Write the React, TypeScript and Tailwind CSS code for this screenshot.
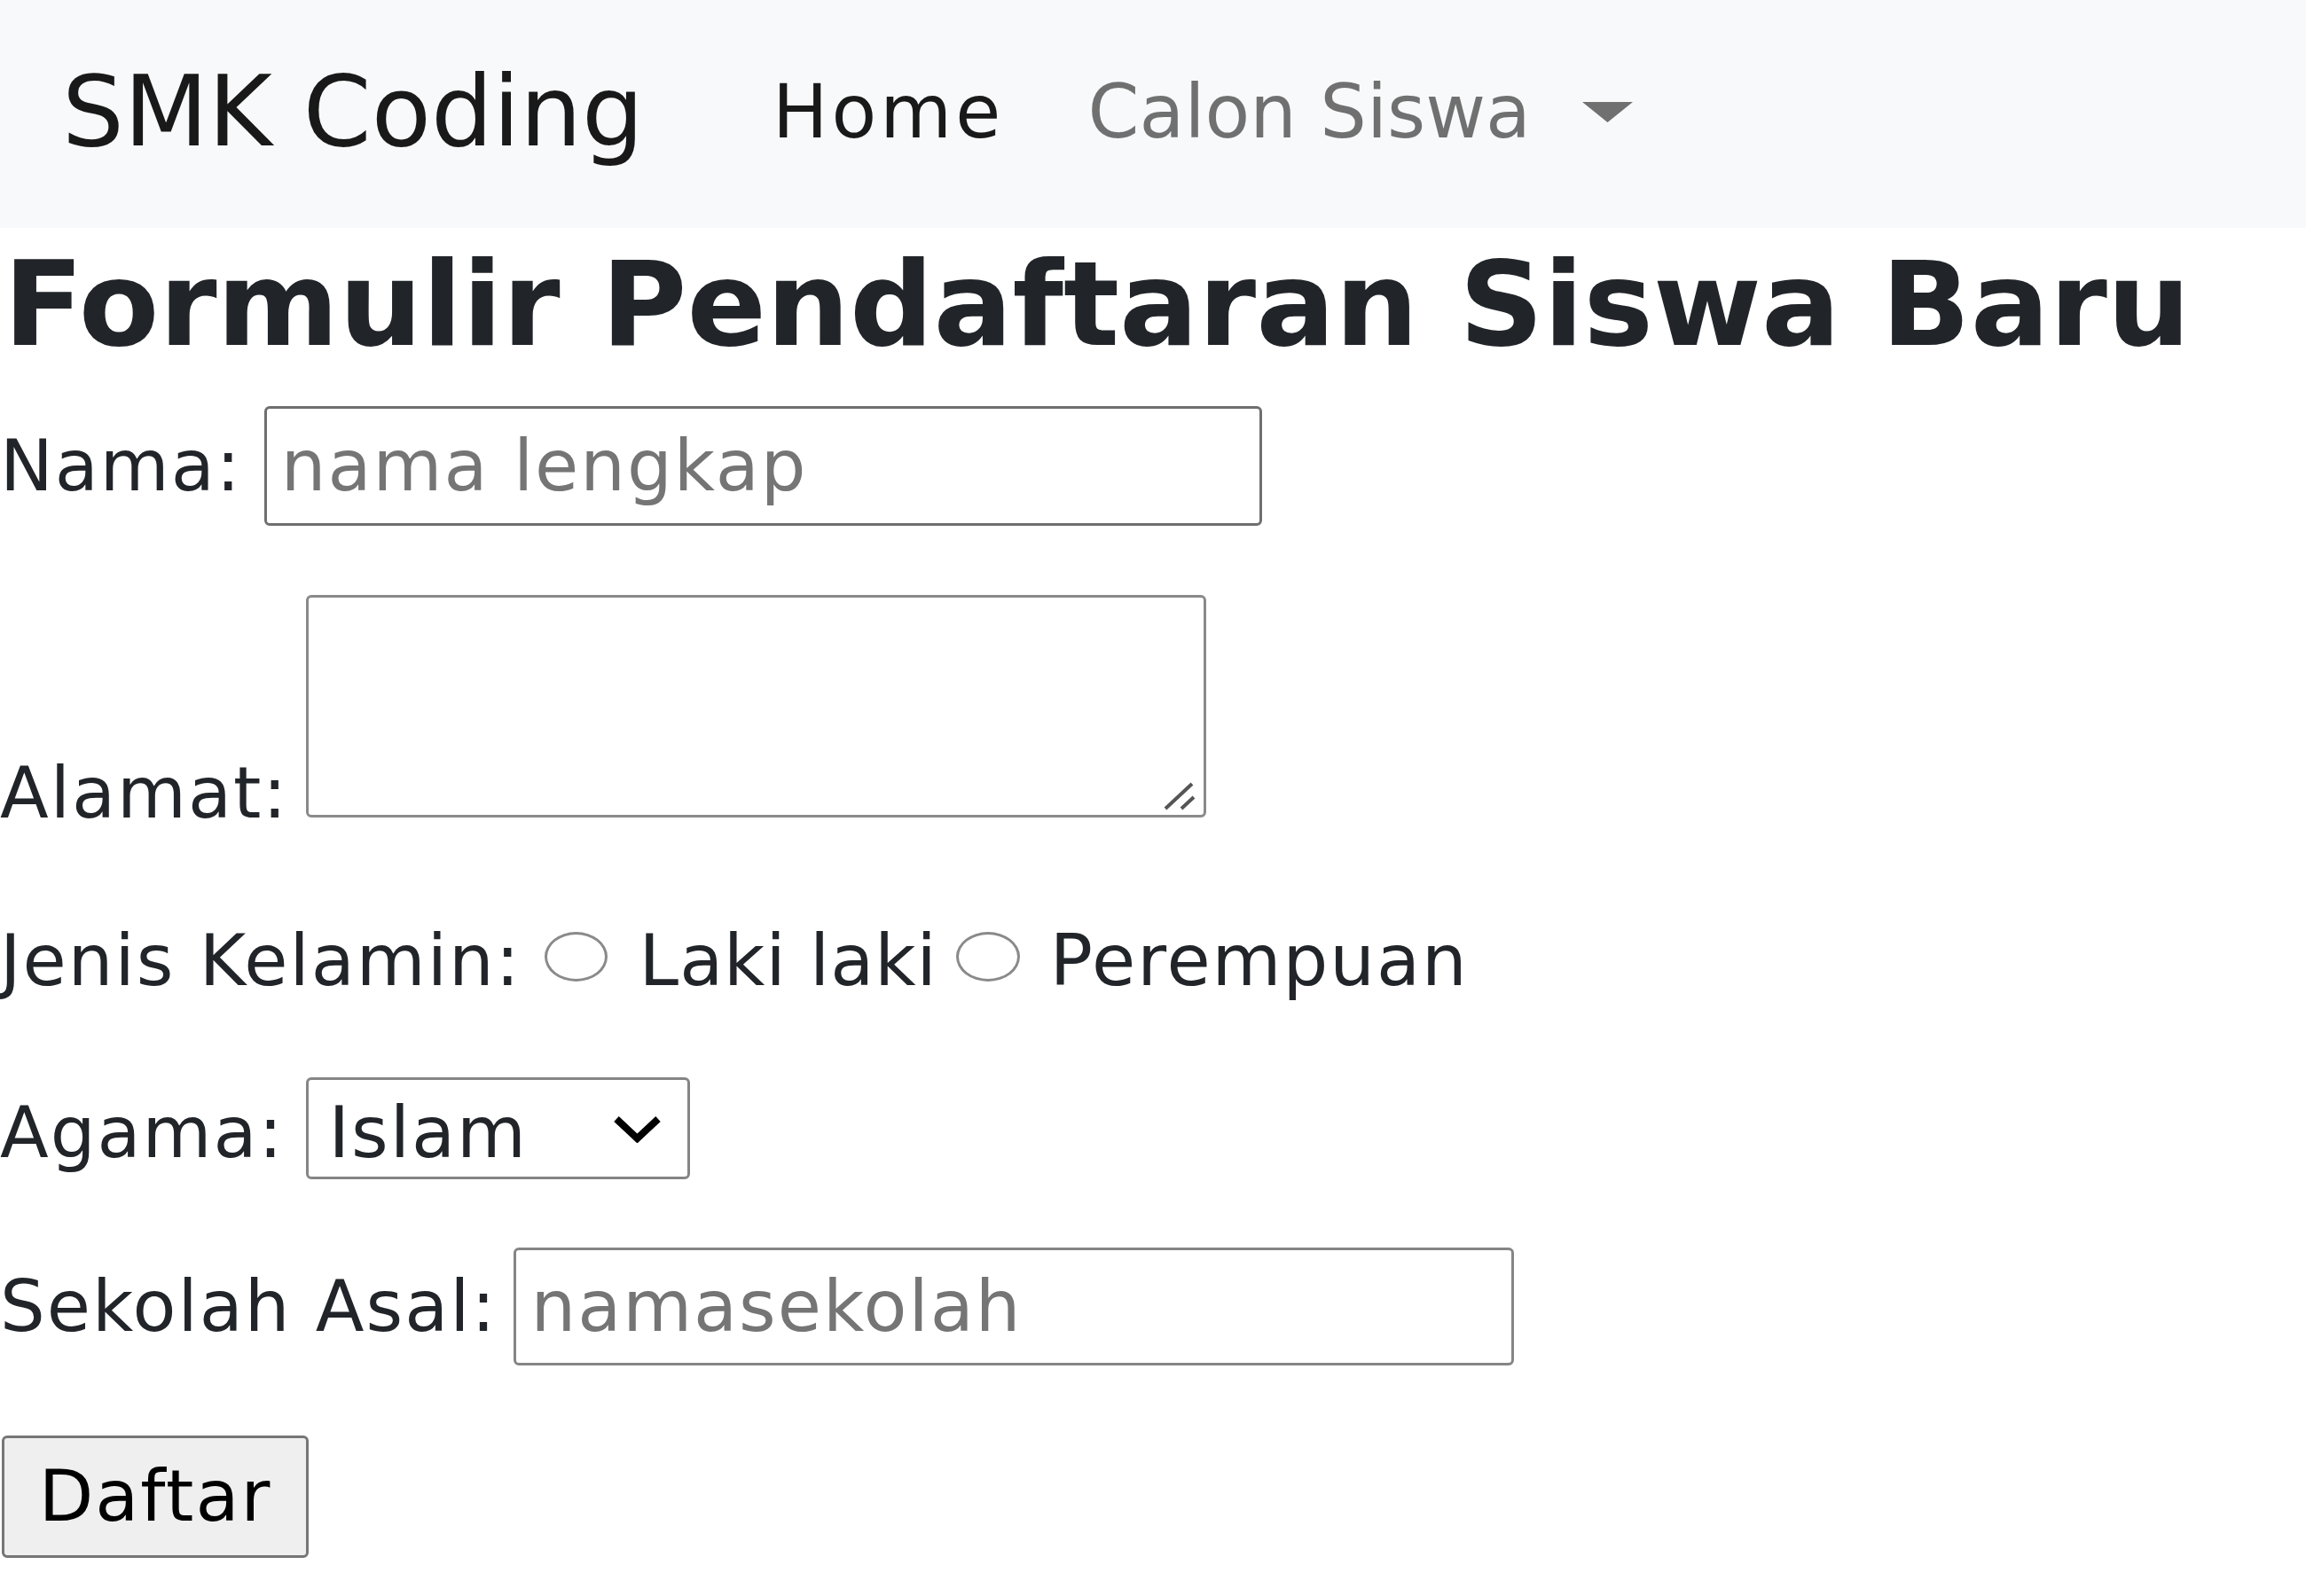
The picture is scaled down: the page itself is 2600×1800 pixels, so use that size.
const agamaList = ["Islam", "Kristen", "Katolik", "Hindu", "Buddha", "Konghucu"];

export default function App() {
  return (
    <div className="min-h-screen bg-white font-['DejaVu_Sans',sans-serif] text-[#212529]">
      <nav className="flex h-[257px] items-center bg-[#f8f9fa] pb-[5px] pl-[70px]">
        <a href="#" className="mr-[145px] text-[110px] leading-none text-black/90">
          SMK Coding
        </a>
        <ul className="flex items-center">
          <li>
            <a href="#" className="text-[83px] leading-none tracking-[0.05em] text-black/90">
              Home
            </a>
          </li>
          <li className="ml-[94px]">
            <a href="#" className="flex items-center text-[83px] leading-none text-black/55">
              Calon Siswa
              <svg className="ml-[58px] h-[23px] w-[57px]" viewBox="0 0 57 23">
                <path d="M0 0H57L28.5 23Z" fill="currentColor" />
              </svg>
            </a>
          </li>
        </ul>
      </nav>

      <h1 className="mt-[20px] pl-[4px] text-[132px] font-bold leading-none">
        Formulir Pendaftaran Siswa Baru
      </h1>

      <form className="text-[80px] tracking-[0.025em]">
        {/* nama */}
        <div className="mt-[49px]">
          <label htmlFor="nama">Nama:</label>
          <input
            id="nama"
            type="text"
            placeholder="nama lengkap"
            className="ml-[25px] h-[135px] w-[1125px] rounded-[6px] border-[3px] border-[#6f6f6f] px-[16px] placeholder:text-[#757575]"
          />
        </div>

        {/* alamat */}
        <div className="mt-[78px]">
          <label htmlFor="alamat">Alamat:</label>
          <span className="relative ml-[20px] inline-block">
            <textarea
              id="alamat"
              className="block h-[251px] w-[1015px] resize-none rounded-[6px] border-[3px] border-[#8a8a8a]"
            />
            <svg
              className="pointer-events-none absolute bottom-[8px] right-[10px] h-[34px] w-[40px]"
              viewBox="0 0 40 34"
            >
              <path d="M4 32L34 4M22 32L36 19" stroke="#555" strokeWidth="4" />
            </svg>
          </span>
        </div>

        {/* jenis kelamin */}
        <div className="mt-[69px]">
          <span>Jenis Kelamin:</span>
          <input
            type="radio"
            name="jk"
            value="L"
            className="mb-[4px] ml-[26px] inline-block h-[56px] w-[71px] appearance-none rounded-[50%] border-[3px] border-[#8a8a8a] bg-white"
          />
          <span className="ml-[36px] tracking-[0.012em]">Laki laki</span>
          <input
            type="radio"
            name="jk"
            value="P"
            className="mb-[4px] ml-[21px] inline-block h-[56px] w-[72px] appearance-none rounded-[50%] border-[3px] border-[#8a8a8a] bg-white"
          />
          <span className="ml-[34px]">Perempuan</span>
        </div>

        {/* agama */}
        <div className="mt-[71px]">
          <label htmlFor="agama">Agama:</label>
          <span className="relative ml-[25px] inline-block">
            <select
              id="agama"
              className="h-[115px] w-[433px] appearance-none rounded-[6px] border-[3px] border-[#858585] bg-white pl-[22px]"
            >
              {agamaList.map((a) => (
                <option key={a}>{a}</option>
              ))}
            </select>
            <svg
              className="pointer-events-none absolute left-[345px] top-[42px] h-[32px] w-[57px]"
              viewBox="0 0 57 32"
            >
              <path d="M5 5L28.5 27L52 5" fill="none" stroke="#000" strokeWidth="8" />
            </svg>
          </span>
        </div>

        {/* sekolah asal */}
        <div className="mt-[69px]">
          <label htmlFor="sekolah">Sekolah Asal:</label>
          <input
            id="sekolah"
            type="text"
            placeholder="namasekolah"
            className="ml-[19px] h-[133px] w-[1128px] rounded-[6px] border-[3px] border-[#858585] px-[16px] placeholder:text-[#757575]"
          />
        </div>

        <div className="mt-[79px]">
          <button
            type="submit"
            className="ml-[2px] h-[138px] w-[346px] rounded-[6px] border-[3px] border-[#767676] bg-[#efefef] text-black"
          >
            Daftar
          </button>
        </div>
      </form>
    </div>
  );
}
